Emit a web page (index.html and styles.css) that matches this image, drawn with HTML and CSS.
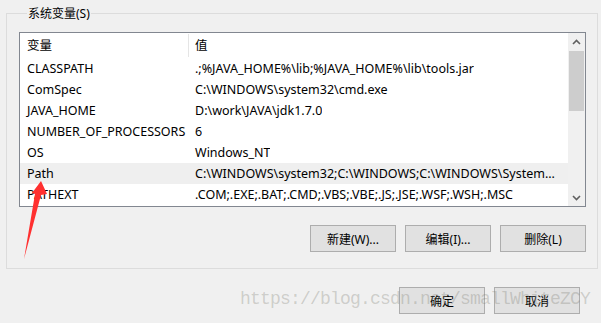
FILE: index.html
```html
<!DOCTYPE html>
<html lang="zh-CN">
<head>
    <meta charset="UTF-8">
    <title>系统变量</title>
    <link rel="stylesheet" href="styles.css">
</head>
<body>
    <div class="group">
        <div class="group-title">系统变量(S)</div>
        <div class="listbox">
            <div class="list-body">
                <div class="row header">
                    <div class="cell name">变量</div>
                    <div class="cell value">值</div>
                </div>
                <div class="row">
                    <div class="cell name">CLASSPATH</div>
                    <div class="cell value">.;%JAVA_HOME%\lib;%JAVA_HOME%\lib\tools.jar</div>
                </div>
                <div class="row">
                    <div class="cell name">ComSpec</div>
                    <div class="cell value">C:\WINDOWS\system32\cmd.exe</div>
                </div>
                <div class="row">
                    <div class="cell name">JAVA_HOME</div>
                    <div class="cell value">D:\work\JAVA\jdk1.7.0</div>
                </div>
                <div class="row">
                    <div class="cell name">NUMBER_OF_PROCESSORS</div>
                    <div class="cell value">6</div>
                </div>
                <div class="row">
                    <div class="cell name">OS</div>
                    <div class="cell value">Windows_NT</div>
                </div>
                <div class="row hot">
                    <div class="cell name">Path</div>
                    <div class="cell value">C:\WINDOWS\system32;C:\WINDOWS;C:\WINDOWS\System...</div>
                </div>
                <div class="row">
                    <div class="cell name">PATHEXT</div>
                    <div class="cell value">.COM;.EXE;.BAT;.CMD;.VBS;.VBE;.JS;.JSE;.WSF;.WSH;.MSC</div>
                </div>
            </div>
            <div class="scrollbar">
                <div class="scroll-btn">
                    <svg width="9" height="6" viewBox="0 0 9 6"><path d="M1 5 L4.5 1.5 L8 5" fill="none" stroke="#606060" stroke-width="1.6"/></svg>
                </div>
                <div class="scroll-track">
                    <div class="scroll-thumb"></div>
                </div>
                <div class="scroll-btn">
                    <svg width="9" height="6" viewBox="0 0 9 6"><path d="M1 1 L4.5 4.5 L8 1" fill="none" stroke="#606060" stroke-width="1.6"/></svg>
                </div>
            </div>
        </div>
        <div class="buttons">
            <button>新建(W)...</button>
            <button>编辑(I)...</button>
            <button>删除(L)</button>
        </div>
    </div>
    <div class="buttons dialog-buttons">
        <button>确定</button>
        <button>取消</button>
    </div>

    <div class="watermark">https://blog.csdn.net/smallWhiteZCY</div>
    <svg class="arrow" width="601" height="323" viewBox="0 0 601 323">
        <polygon points="41,181 47,194 41,195 24,259 35,194 32,193" fill="#ff3030"/>
    </svg>
</body>
</html>
```

FILE: styles.css
```css
body {
    margin: 0;
    width: 601px;
    height: 323px;
    background-color: #f0f0f0;
    font-family: "Noto Sans", "Noto Sans CJK SC", sans-serif;
    font-size: 12px;
    color: #000;
    position: relative;
    overflow: hidden;
}
.group {
    margin: 13px 3px 0 6px;
    border: 1px solid #dcdcdc;
    padding: 0 0 16px 12px;
}
.group-title {
    width: fit-content;
    height: 16px;
    line-height: 16px;
    margin: -8px 0 0 8px;
    padding: 0 1px;
    background-color: #f0f0f0;
    color: #000;
}
.listbox {
    display: flex;
    width: 567px;
    height: 175px;
    margin-top: 10px;
    box-sizing: border-box;
    border: 1px solid #828790;
    background-color: #fff;
}
.list-body {
    flex: 1;
    font-size: 12.5px;
}
.row {
    display: flex;
    height: 21px;
    line-height: 22px;
    white-space: nowrap;
}
.row.header {
    height: 25px;
    line-height: 25px;
}
.row.hot {
    background-color: #efefef;
}
.cell.name {
    width: 169px;
    padding-left: 7px;
    box-sizing: border-box;
    flex-shrink: 0;
}
.cell.value {
    padding-left: 6px;
    overflow: hidden;
}
.header .cell.name {
    border-right: 1px solid #e5e5e5;
    margin: 1px 0;
    height: 23px;
    line-height: 23px;
}
.scrollbar {
    width: 17px;
    display: flex;
    flex-direction: column;
    background-color: #f0f0f0;
}
.scroll-btn {
    height: 17px;
    display: flex;
    align-items: center;
    justify-content: center;
}
.scroll-track {
    flex: 1;
    padding: 1px 1px 0 1px;
}
.scroll-thumb {
    height: 60px;
    background-color: #cdcdcd;
}
.buttons {
    display: flex;
    justify-content: flex-end;
    gap: 9px;
    width: 567px;
    margin-top: 18px;
}
.dialog-buttons {
    width: 580px;
    margin-top: 18px;
}
button {
    width: 86px;
    height: 27px;
    padding: 0;
    border: 1px solid #adadad;
    background-color: #e1e1e1;
    font-family: "Noto Sans", "Noto Sans CJK SC", sans-serif;
    font-size: 12px;
    color: #000;
}
.watermark {
    position: absolute;
    left: 240px;
    top: 289px;
    font-family: "Liberation Mono", monospace;
    font-size: 18px;
    letter-spacing: -0.8px;
    color: rgba(120, 120, 110, 0.3);
    pointer-events: none;
    white-space: nowrap;
}
.arrow {
    position: absolute;
    left: 0;
    top: 0;
    pointer-events: none;
}
```
